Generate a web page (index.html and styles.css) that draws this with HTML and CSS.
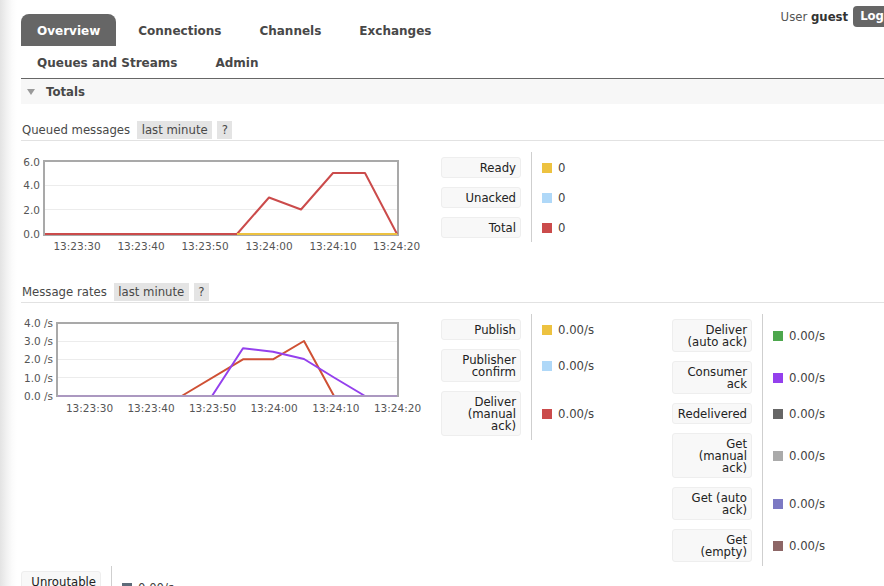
FILE: index.html
```html
<!DOCTYPE html>
<html lang="en">
<head>
<meta charset="utf-8">
<title>RabbitMQ Management: Overview</title>
<link rel="stylesheet" href="styles.css">
</head>
<body>
<div class="page">
  <header class="top">
    <ul class="menu">
      <li><a class="active">Overview</a></li>
      <li><a>Connections</a></li>
      <li><a>Channels</a></li>
      <li><a>Exchanges</a></li>
      <li><a>Queues and Streams</a></li>
      <li><a>Admin</a></li>
    </ul>
    <div class="login"><span>User <b>guest</b></span><span class="logout">Log out</span></div>
  </header>

  <div class="section-h"><span class="tri"></span>Totals</div>

  <div class="chart-h first"><span class="title">Queued messages</span><span class="pill">last minute</span><span class="pill">?</span></div>
  <div class="chart-row">
    <svg class="chart" width="420" height="100" viewBox="21 152 420 100">
      <g class="grid">
        <line x1="45" y1="185.5" x2="398" y2="185.5"/>
        <line x1="45" y1="209.5" x2="398" y2="209.5"/>
      </g>
      <rect class="frame" x="44" y="161" width="354" height="74"/>
      <polyline class="ln red" points="45,234 237,234 269,197.5 301,209.5 333,173 365,173 397,234"/>
      <polyline class="ln yellow" points="237,234 397,234"/>
      <g class="yl">
        <text x="40" y="165.5">6.0</text>
        <text x="40" y="189.3">4.0</text>
        <text x="40" y="213.7">2.0</text>
        <text x="40" y="237.8">0.0</text>
      </g>
      <g class="xl">
        <text x="77" y="249.8">13:23:30</text>
        <text x="141" y="249.8">13:23:40</text>
        <text x="205" y="249.8">13:23:50</text>
        <text x="269" y="249.8">13:24:00</text>
        <text x="333" y="249.8">13:24:10</text>
        <text x="396.5" y="249.8">13:24:20</text>
      </g>
    </svg>
    <div class="legends">
      <table class="legend">
        <tr><th><div class="tile">Ready</div></th><td><div class="val"><span class="sw" style="background:#edc240"></span>0</div></td></tr>
        <tr><th><div class="tile">Unacked</div></th><td><div class="val"><span class="sw" style="background:#afd8f8"></span>0</div></td></tr>
        <tr><th><div class="tile">Total</div></th><td><div class="val"><span class="sw" style="background:#cb4b4b"></span>0</div></td></tr>
      </table>
    </div>
  </div>

  <div class="chart-h second"><span class="title">Message rates</span><span class="pill">last minute</span><span class="pill">?</span></div>
  <div class="chart-row">
    <svg class="chart" width="420" height="100" viewBox="21 314 420 100">
      <g class="grid">
        <line x1="58" y1="341.5" x2="398" y2="341.5"/>
        <line x1="58" y1="359.5" x2="398" y2="359.5"/>
        <line x1="58" y1="377.5" x2="398" y2="377.5"/>
      </g>
      <rect class="frame" x="57" y="323" width="341" height="73"/>
      <polyline class="ln orange" points="58,396 181.7,396 243,359.3 273,359.3 304,341 334,396 397,396"/>
      <polyline class="ln purple" points="212,396 243,348.3 273,351.7 304,359 334,377.5 365,396"/>
      <polyline class="ln base" points="58,396 397,396"/>
      <g class="yl">
        <text x="53" y="327">4.0 /s</text>
        <text x="53" y="345">3.0 /s</text>
        <text x="53" y="363.2">2.0 /s</text>
        <text x="53" y="381.5">1.0 /s</text>
        <text x="53" y="399.8">0.0 /s</text>
      </g>
      <g class="xl">
        <text x="89.5" y="411.6">13:23:30</text>
        <text x="151" y="411.6">13:23:40</text>
        <text x="212.5" y="411.6">13:23:50</text>
        <text x="274" y="411.6">13:24:00</text>
        <text x="335.8" y="411.6">13:24:10</text>
        <text x="397.5" y="411.6">13:24:20</text>
      </g>
    </svg>
    <div class="legends">
      <div class="legend-col">
        <table class="legend">
          <tr><th><div class="tile">Publish</div></th><td><div class="val"><span class="sw" style="background:#edc240"></span>0.00/s</div></td></tr>
          <tr><th><div class="tile">Publisher<br>confirm</div></th><td><div class="val"><span class="sw" style="background:#afd8f8"></span>0.00/s</div></td></tr>
          <tr><th><div class="tile">Deliver<br>(manual<br>ack)</div></th><td><div class="val"><span class="sw" style="background:#cb4b4b"></span>0.00/s</div></td></tr>
        </table>
      </div>
      <div class="legend-col">
        <table class="legend">
          <tr><th><div class="tile">Deliver<br>(auto ack)</div></th><td><div class="val"><span class="sw" style="background:#4da74d"></span>0.00/s</div></td></tr>
          <tr><th><div class="tile">Consumer<br>ack</div></th><td><div class="val"><span class="sw" style="background:#9440ed"></span>0.00/s</div></td></tr>
          <tr><th><div class="tile">Redelivered</div></th><td><div class="val"><span class="sw" style="background:#666666"></span>0.00/s</div></td></tr>
          <tr><th><div class="tile">Get<br>(manual<br>ack)</div></th><td><div class="val"><span class="sw" style="background:#aaaaaa"></span>0.00/s</div></td></tr>
          <tr><th><div class="tile">Get (auto<br>ack)</div></th><td><div class="val"><span class="sw" style="background:#7c79c3"></span>0.00/s</div></td></tr>
          <tr><th><div class="tile">Get<br>(empty)</div></th><td><div class="val"><span class="sw" style="background:#8d6666"></span>0.00/s</div></td></tr>
        </table>
      </div>
    </div>
  </div>
  <table class="legend">
    <tr><th><div class="tile">Unroutable<br>(return)</div></th><td><div class="val"><span class="sw" style="background:#5d6b79"></span>0.00/s</div></td></tr>
    <tr><th><div class="tile">Unroutable<br>(drop)</div></th><td><div class="val"><span class="sw" style="background:#b8a36a"></span>0.00/s</div></td></tr>
  </table>
</div>
</body>
</html>
```

FILE: styles.css
```css
html, body {
  margin: 0;
  padding: 0;
  height: 100%;
  overflow: hidden;
}

body {
  font-family: "DejaVu Sans", Verdana, sans-serif;
  font-size: 11.7px;
  color: #484848;
  background: #fff linear-gradient(90deg, #e3e3e3 0, #f0f0f0 6px, #fbfbfb 12px, #fff 17px) repeat-y;
}

.page {
  width: 900px;
  padding-left: 21px;
}

/* header */
.top {
  display: flex;
  justify-content: space-between;
  align-items: flex-start;
  height: 78px;
  border-bottom: 1px solid #666;
}

.menu {
  list-style: none;
  margin: 14px 0 0;
  padding: 0;
  display: flex;
  flex-wrap: wrap;
  width: 520px;
}

.menu a {
  display: block;
  box-sizing: border-box;
  height: 32px;
  padding: 2px 16px 0;
  line-height: 30px;
  margin-right: 6px;
  font-size: 12px;
  font-weight: bold;
  color: #484848;
  border-radius: 8px 8px 0 0;
}

.menu a.active {
  background: #666;
  color: #fff;
}

.login {
  margin-top: 6px;
  margin-right: 4px;
  display: flex;
  align-items: center;
  gap: 5px;
  color: #555;
}

.login b {
  color: #333;
}

.logout {
  background: #666;
  color: #fff;
  font-weight: bold;
  height: 21px;
  line-height: 21px;
  padding: 0 7px;
  border-radius: 4px;
}

/* collapsible section bar */
.section-h {
  display: flex;
  align-items: center;
  box-sizing: border-box;
  height: 25px;
  padding: 1px 0 0 6px;
  background: #f7f7f7;
  font-weight: bold;
  color: #484848;
}

.tri {
  width: 0;
  height: 0;
  border-left: 4.5px solid transparent;
  border-right: 4.5px solid transparent;
  border-top: 6px solid #9a9a9a;
  margin-right: 11px;
}

/* chart headers */
.chart-h {
  display: flex;
  align-items: flex-end;
  line-height: 17px;
  padding-bottom: 1px;
  border-bottom: 1px solid #e2e2e2;
}

.chart-h.first {
  margin-top: 17px;
}

.chart-h.second {
  margin-top: 31px;
}

.chart-h .title {
  margin-right: 7px;
  padding: 1px 0 0 1px;
}

.pill {
  background: #e4e4e4;
  padding: 1px 4.5px 0;
  margin-right: 5px;
  color: #484848;
}

.chart-row {
  display: flex;
  align-items: flex-start;
  margin-top: 11px;
}

.chart {
  display: block;
  flex-shrink: 0;
}

.chart .grid line {
  stroke: #ececec;
  stroke-width: 1;
  shape-rendering: crispEdges;
}

.chart .frame {
  fill: none;
  stroke: #a9a9a9;
  stroke-width: 2;
}

.chart .ln {
  fill: none;
  stroke-width: 2;
  stroke-linejoin: round;
}

.chart .red { stroke: #cb4b4b; }
.chart .yellow { stroke: #edc240; }
.chart .orange { stroke: #cf5034; }
.chart .purple { stroke: #9440ed; }
.chart .base { stroke: #ab98c0; }

.chart text {
  font-family: "DejaVu Sans", Verdana, sans-serif;
  font-size: 10.5px;
  fill: #555;
}

.chart .yl text { text-anchor: end; }
.chart .xl text { text-anchor: middle; }

/* legends */
.legends {
  display: flex;
  align-items: flex-start;
}

.legend-col {
  width: 231px;
}

.legend {
  border-collapse: separate;
  border-spacing: 0;
  font-size: 11.7px;
}

.legend th {
  padding: 5px 10px 4px 0;
  font-weight: normal;
  vertical-align: middle;
}

.legend td {
  padding: 0 0 0 10px;
  border-left: 1px solid #cfcfcf;
  vertical-align: middle;
}

.tile {
  width: 80px;
  box-sizing: border-box;
  padding: 4px 4px 3px 4px;
  border: 1px solid #eee;
  border-radius: 3px;
  background: #f8f8f8;
  text-align: right;
  line-height: 12px;
  color: #222;
  white-space: nowrap;
}

.val {
  display: flex;
  align-items: center;
  padding-top: 1px;
  color: #444;
  white-space: nowrap;
}

.sw {
  display: block;
  width: 10px;
  height: 10px;
  margin-right: 6px;
}
```
